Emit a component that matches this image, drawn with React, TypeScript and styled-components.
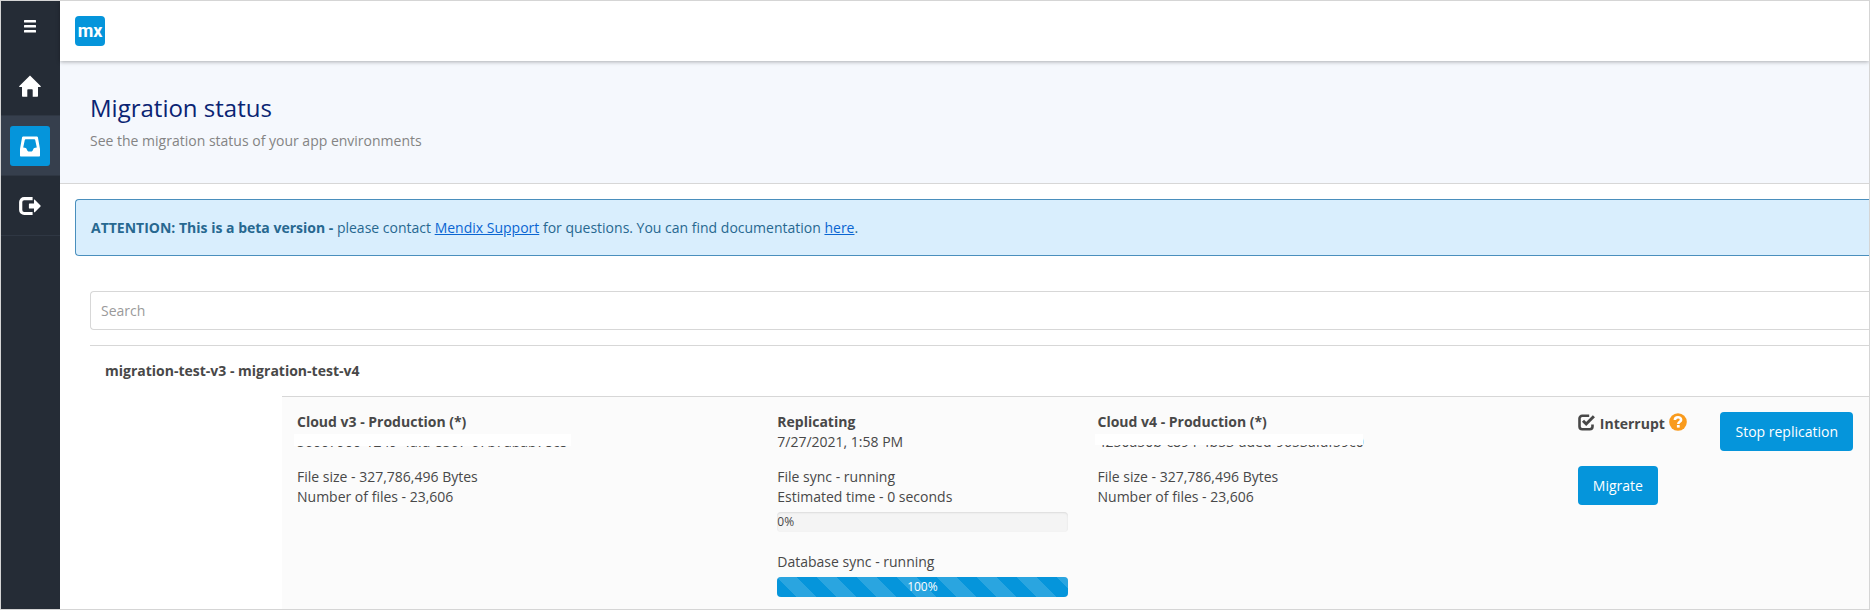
import React from "react";
import styled, { createGlobalStyle } from "styled-components";

const GlobalStyle = createGlobalStyle`
  *, *::before, *::after { box-sizing: border-box; }
  body {
    margin: 0;
    background: #fff;
    color: #484848;
    font: 14px/20px "Open Sans", "Noto Sans", sans-serif;
  }
`;

const Frame = styled.div`
  display: flex;
  min-height: 100vh;
  border: 1px solid #d5d5d5;
  overflow: hidden;
`;

const Sidebar = styled.nav`
  flex: none;
  width: 59px;
  background: #252c36;
`;

const MenuToggle = styled.button`
  display: flex;
  align-items: center;
  justify-content: center;
  width: 100%;
  height: 55px;
  padding: 0 1px 4px 0;
  border: 0;
  background: none;
  color: #fff;
`;

const NavLink = styled.a<{ $active?: boolean }>`
  display: flex;
  align-items: center;
  justify-content: center;
  height: 60px;
  padding-right: 1px;
  box-shadow: inset 0 -1px #2f3743;
  background: ${(p) => (p.$active ? "#363f4d" : "transparent")};
  color: #fff;
`;

const NavIcon = styled.span<{ $active?: boolean }>`
  display: flex;
  align-items: center;
  justify-content: center;
  width: 40px;
  height: 40px;
  border-radius: 3px;
  background: ${(p) => (p.$active ? "#0595db" : "transparent")};
`;

const Main = styled.div`
  flex: 1;
  min-width: 0;
`;

const TopBar = styled.header`
  position: relative;
  display: flex;
  align-items: center;
  height: 60px;
  padding-left: 15px;
  background: #fff;
  box-shadow: 0 1px 4px rgba(0, 0, 0, 0.3);
`;

const Logo = styled.svg`
  display: block;
  width: 30px;
  height: 30px;
`;

const LogoText = styled.text`
  font: 700 18px Roboto, sans-serif;
`;

const PageHead = styled.div`
  height: 123px;
  padding: 31px 30px;
  border-bottom: 1px solid #d7d7d7;
  background: #f5f8fd;
`;

const PageTitle = styled.h1`
  margin: 0;
  color: #0a2473;
  font-size: 24px;
  font-weight: 400;
  line-height: 32px;
`;

const PageSubtitle = styled.p`
  margin: 7px 0 0;
  color: #848484;
`;

const Alert = styled.div`
  margin: 15px 0 35px 15px;
  padding: 18px 15px 17px;
  border: 1px solid #4a8fbd;
  border-right: 0;
  border-radius: 4px 0 0 4px;
  background: #d9eefd;
  color: #276890;

  a { color: #0a65d2; }
`;

const Content = styled.main`
  padding-left: 30px;
`;

const SearchInput = styled.input`
  display: block;
  width: 100%;
  height: 39px;
  padding: 0 10px;
  border: 1px solid #d7d7d7;
  border-right: 0;
  border-radius: 4px 0 0 4px;
  background: #fff;
  color: #484848;
  font: inherit;

  &::placeholder { color: #9a9a9a; opacity: 1; }
`;

const AppItem = styled.section`
  margin-top: 15px;
  border-top: 1px solid #d7d7d7;
`;

const AppName = styled.h2`
  margin: 0;
  padding: 15px;
  font-size: 14px;
  font-weight: 700;
  line-height: 20px;
`;

const Environment = styled.div`
  display: grid;
  grid-template-columns: 3fr 2fr 3fr 2fr;
  margin-left: 192px;
  margin-right: -14px;
  padding: 15px 0 12px;
  border-top: 1px solid #d7d7d7;
  background: #fbfbfb;
`;

const Column = styled.div`
  min-width: 0;
  padding: 0 15px;
`;

const Heading = styled.h3`
  margin: 0;
  font-size: 14px;
  font-weight: 700;
  line-height: 20px;
`;

const Line = styled.p`
  margin: 0;
`;

const Group = styled.div`
  margin-top: 15px;
`;

const MaskedId = styled.p<{ $cover: number; $overhang: number }>`
  position: relative;
  width: fit-content;
  margin: 0;

  &::after {
    content: "";
    position: absolute;
    top: 2px;
    left: -3px;
    right: ${(p) => -p.$overhang}px;
    height: ${(p) => p.$cover}px;
    background: #fff;
  }
`;

const Progress = styled.div`
  display: flex;
  height: 20px;
  margin-top: 5px;
  border-radius: 4px;
  background: #f4f4f4;
  box-shadow: inset 0 1px 2px rgba(0, 0, 0, 0.1);
  font-size: 12px;
  overflow: hidden;

  & + p { margin-top: 20px; }
`;

const ProgressFill = styled.div`
  text-align: center;
  white-space: nowrap;
  color: #484848;

  &[data-filled="true"] {
    color: #fff;
    background: #0595db linear-gradient(
      45deg,
      rgba(255, 255, 255, 0.15) 25%,
      transparent 25%,
      transparent 50%,
      rgba(255, 255, 255, 0.15) 50%,
      rgba(255, 255, 255, 0.15) 75%,
      transparent 75%,
      transparent
    ) 0 0 / 40px 40px;
  }
`;

const Actions = styled(Column)`
  display: flex;
  align-items: flex-start;
  justify-content: space-between;
  padding-right: 30px;
`;

const ActionStack = styled.div`
  display: flex;
  flex-direction: column;
  align-items: flex-start;
  gap: 30px;
`;

const InterruptRow = styled.div`
  display: flex;
  align-items: flex-start;
  gap: 4px;
`;

const CheckLabel = styled.label`
  position: relative;
  display: flex;
  gap: 5px;
  font-weight: 700;
  line-height: 24px;

  input {
    position: absolute;
    inset: 0;
    width: 17px;
    height: 17px;
    margin: 0;
    opacity: 0;
  }

  svg { margin-top: 2px; }
`;

const HelpButton = styled.button`
  display: flex;
  padding: 1px 0 0;
  border: 0;
  background: none;
`;

const Button = styled.button`
  height: 39px;
  padding: 0 15px;
  border: 0;
  border-radius: 4px;
  background: #0595db;
  color: #fff;
  font: inherit;
  white-space: nowrap;
`;

function MenuIcon() {
  return (
    <svg width="12" height="13" viewBox="0 0 12 13" fill="currentColor" aria-hidden="true">
      <rect width="12" height="2.6" rx=".5" />
      <rect y="5" width="12" height="2.6" rx=".5" />
      <rect y="10" width="12" height="2.6" rx=".5" />
    </svg>
  );
}

function HomeIcon() {
  return (
    <svg width="22" height="22" viewBox="0 0 22 22" fill="currentColor" aria-hidden="true">
      <path d="M11 .6 21.600 11.100c.4.5.2 1-.4 1H19v8.900a.7.7 0 0 1-.7.7h-4.600v-6.700a.7.7 0 0 0-.7-.7H9a.7.7 0 0 0-.7.7v6.700H3.700a.7.7 0 0 1-.7-.7v-8.900H.8c-.6 0-.8-.5-.4-1z" />
    </svg>
  );
}

function InboxIcon() {
  return (
    <svg width="20" height="21" viewBox="0 0 20 21" fill="currentColor" aria-hidden="true">
      <path fillRule="evenodd" d="M3.200.4h13.600c.6 0 1 .3 1.100.9L20 13v6.600c0 .6-.4 1-1 1H1c-.6 0-1-.4-1-1V13L2.100 1.300C2.200.7 2.600.4 3.200.4zM5.700 3.200c-.5 0-.8.200-.9.700L3.200 11.500l1.500.2c.7 0 1.300.2 1.700.8l.9 2.100c.2.5.5.8 1 .8h3.400c.5 0 .8-.3 1-.8l.9-2.100c.4-.6 1-.8 1.700-.8l1.500-.2-1.600-7.600c-.1-.5-.4-.7-.9-.7z" />
    </svg>
  );
}

function LogoutIcon() {
  return (
    <svg width="22" height="20" viewBox="0 0 22 20" aria-hidden="true">
      <path d="M13.600 2.600H5.200a3.500 3.500 0 0 0-3.500 3.500v7.900a3.500 3.500 0 0 0 3.500 3.500h8.400" fill="none" stroke="currentColor" strokeWidth="3.200" />
      <path d="M10.500 7.600h4.500V4c0-.5.400-.6.800-.3l5.700 5.700c.3.300.3.800 0 1.100l-5.700 5.700c-.4.300-.8.200-.8-.3v-3.300h-4.500a.6.6 0 0 1-.6-.6V8.200c0-.3.300-.6.600-.6z" fill="currentColor" />
    </svg>
  );
}

function CheckIcon() {
  return (
    <svg width="17" height="17" viewBox="0 0 17 17" fill="none" stroke="currentColor" aria-hidden="true">
      <path d="M11.200 1.800H4.200A2.700 2.700 0 0 0 1.500 4.500v8A2.700 2.700 0 0 0 4.200 15.200h7.600a2.700 2.700 0 0 0 2.700-2.700V10.600" strokeWidth="2.600" />
      <path d="M5 6.800 8.200 10 15.900 2.300" strokeWidth="3" />
    </svg>
  );
}

function HelpIcon() {
  return (
    <svg width="18" height="18" viewBox="0 0 18 18" aria-hidden="true">
      <circle cx="9" cy="9" r="8.800" fill="#f99b1d" />
      <path d="M5.900 7.100C5.900 4.900 7.200 4.300 9 4.300s3.100 1 3.100 2.600c0 2-2.800 1.800-2.800 4" fill="none" stroke="#fff" strokeWidth="2.600" />
      <rect x="7.900" y="12" width="2.800" height="2.600" fill="#fff" />
    </svg>
  );
}

function ProgressBar({ value, label }: { value: number; label: string }) {
  return (
    <Progress role="progressbar" aria-label={label} aria-valuenow={value} aria-valuemin={0} aria-valuemax={100}>
      <ProgressFill data-filled={value > 0} style={{ width: `${value}%` }}>
        {value}%
      </ProgressFill>
    </Progress>
  );
}

interface CloudColumnProps {
  name: string;
  id: string;
  cover: number;
  overhang: number;
}

function CloudColumn({ name, id, cover, overhang }: CloudColumnProps) {
  return (
    <Column>
      <Heading>{name}</Heading>
      <MaskedId $cover={cover} $overhang={overhang}>{id}</MaskedId>
      <Group>
        <Line>File size - 327,786,496 Bytes</Line>
        <Line>Number of files - 23,606</Line>
      </Group>
    </Column>
  );
}

export default function App() {
  return (
    <>
      <GlobalStyle />
      <Frame>
        <Sidebar aria-label="Main">
          <MenuToggle aria-label="Toggle menu"><MenuIcon /></MenuToggle>
          <NavLink href="#home" aria-label="Home"><NavIcon><HomeIcon /></NavIcon></NavLink>
          <NavLink href="#migration" aria-label="Migration status" $active>
            <NavIcon $active><InboxIcon /></NavIcon>
          </NavLink>
          <NavLink href="#logout" aria-label="Sign out"><NavIcon><LogoutIcon /></NavIcon></NavLink>
        </Sidebar>
        <Main>
          <TopBar>
            <Logo viewBox="0 0 30 30" role="img" aria-label="mx">
              <rect width="30" height="30" rx="4" fill="#0595db" />
              <LogoText x="15" y="21" textAnchor="middle" fill="#fff">mx</LogoText>
            </Logo>
          </TopBar>
          <PageHead>
            <PageTitle>Migration status</PageTitle>
            <PageSubtitle>See the migration status of your app environments</PageSubtitle>
          </PageHead>
          <Alert role="note">
            <strong>ATTENTION: This is a beta version - </strong>
            please contact <a href="#support">Mendix Support</a> for questions. You can find documentation{" "}
            <a href="#documentation">here</a>.
          </Alert>
          <Content>
            <SearchInput type="search" placeholder="Search" aria-label="Search" />
            <AppItem>
              <AppName>migration-test-v3 - migration-test-v4</AppName>
              <Environment>
                <CloudColumn
                  name="Cloud v3 - Production (*)"
                  id="56007900-1249-4afa-8567-67b7abab78c8"
                  cover={12}
                  overhang={4}
                />
                <Column>
                  <Heading>Replicating</Heading>
                  <Line>7/27/2021, 1:58 PM</Line>
                  <Group>
                    <Line>File sync - running</Line>
                    <Line>Estimated time - 0 seconds</Line>
                    <ProgressBar value={0} label="File sync" />
                    <Line>Database sync - running</Line>
                    <ProgressBar value={100} label="Database sync" />
                  </Group>
                </Column>
                <CloudColumn
                  name="Cloud v4 - Production (*)"
                  id="4250a50b-c894-4b53-aded-9653afaf59c0"
                  cover={11}
                  overhang={-1}
                />
                <Actions>
                  <ActionStack>
                    <InterruptRow>
                      <CheckLabel>
                        <input type="checkbox" defaultChecked />
                        <CheckIcon />
                        Interrupt
                      </CheckLabel>
                      <HelpButton aria-label="Help"><HelpIcon /></HelpButton>
                    </InterruptRow>
                    <Button>Migrate</Button>
                  </ActionStack>
                  <Button>Stop replication</Button>
                </Actions>
              </Environment>
            </AppItem>
          </Content>
        </Main>
      </Frame>
    </>
  );
}
